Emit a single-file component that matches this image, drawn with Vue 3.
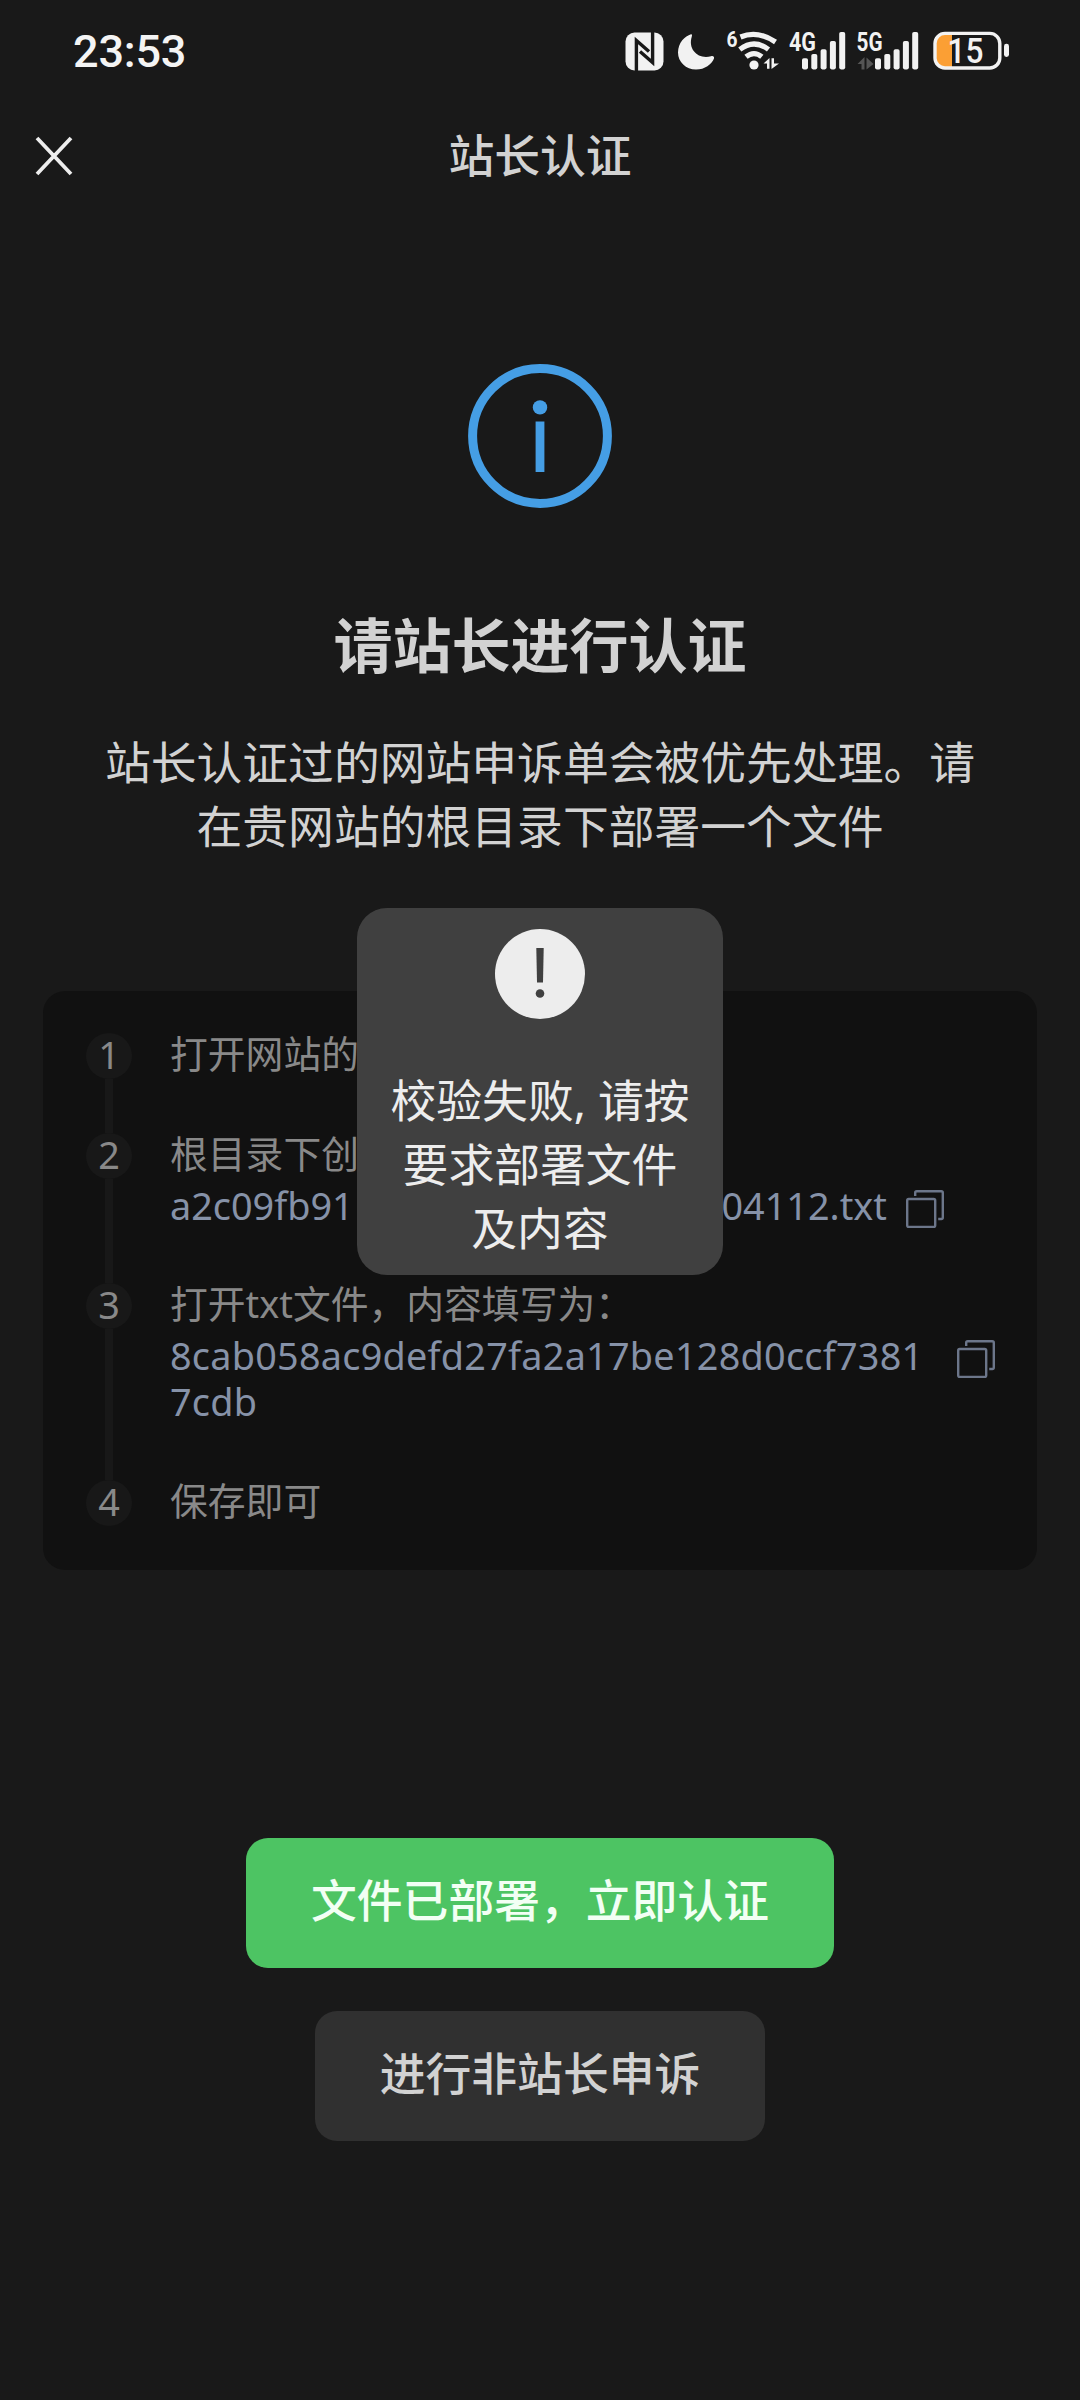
<script setup>
const steps = [
  { n: 1, text: '打开网站的', h: 100 },
  { n: 2, text: '根目录下创', code: [['a2c09fb91', '04112.txt']], h: 150 },
  { n: 3, text: '打开txt文件，内容填写为：', code: [['8cab058ac9defd27fa2a17be128d0ccf7381'], ['7cdb']], h: 197 },
  { n: 4, text: '保存即可', h: 60 },
]
const levels = [58.3, 54, 49.3, 41, 32]
const bars = (x0) => levels.map((y, i) => ({ x: x0 + i * 9.3, y, h: 69.4 - y }))
const signals = [...bars(802), ...bars(875)]
</script>

<template>
  <div class="screen">
    <header class="status">
      <span class="time">23:53</span>
      <svg class="indicators" viewBox="600 0 480 100" width="480" height="100" fill="#f2f2f2">
        <!-- NFC -->
        <rect x="625.5" y="32.5" width="38" height="38" rx="9" />
        <path d="M636.400 71.500V40.500L649 51.500" fill="none" stroke="#191919" stroke-width="3.400" />
        <path d="M652.600 31.500V62.500L640 51.500" fill="none" stroke="#191919" stroke-width="3.400" />
        <!-- Moon -->
        <path d="M691 34.200C685 36 678 42.500 678 52.500C678 62 686 69.500 696 69.500C705 69.500 711.500 64.500 714 58.500C714.500 56.500 713 55.500 711 56.200C699 59.800 687.500 50 691.800 36.500C692.300 34.800 692 34 691 34.200Z" />
        <!-- Wi-Fi -->
        <g fill="none" stroke="#f2f2f2" stroke-width="5.200">
          <path d="M740.500 37Q757.500 29.800 775.500 42" />
          <path d="M739.800 49.500Q754 38.500 768.500 49.500" />
          <path d="M746 56.800Q754 50.500 761.800 56.800" />
        </g>
        <circle cx="754" cy="65" r="4.600" />
        <path d="M763.500 63.500L769.500 58V68.700H767V63.500ZM771.500 69V58.300H774V63.500H779Z" />
        <text class="tag" x="726.500" y="46.500" font-size="22" textLength="11" lengthAdjust="spacingAndGlyphs">6</text>
        <text class="tag" x="789" y="50.500" font-size="25" textLength="27" lengthAdjust="spacingAndGlyphs">4G</text>
        <text class="tag" x="856.500" y="50.500" font-size="25" textLength="26" lengthAdjust="spacingAndGlyphs">5G</text>
        <rect v-for="(b, i) in signals" :key="i" :x="b.x" :y="b.y" width="6" :height="b.h" rx="1.800" />
        <path d="M857.500 64L864.500 57V69.500H861.500V64ZM866.500 69.500V57.500L873.500 64Z" fill="#555" />
        <!-- Battery -->
        <path d="M945 34H952V67.500H945Q936 67.500 936 57V44Q936 34 945 34Z" fill="#fb9f34" />
        <rect x="935" y="33.400" width="64.800" height="34.600" rx="10" fill="none" stroke="#f2f2f2" stroke-width="3.400" />
        <rect x="1004" y="43.800" width="5" height="13.200" rx="2.400" />
        <text class="tag level" x="947.500" y="62.500" font-size="34.500" textLength="36" lengthAdjust="spacingAndGlyphs">15</text>
      </svg>
    </header>

    <nav class="nav">
      <svg class="close" width="40" height="40" viewBox="0 0 40 40" stroke="#ededed" stroke-width="3.800">
        <path d="M3 2L37 38M37 2L3 38" />
      </svg>
      <h1>站长认证</h1>
      <span class="side"></span>
    </nav>

    <main>
      <svg class="info" width="144" height="144" viewBox="0 0 144 144">
        <circle cx="72" cy="72" r="67.400" fill="none" stroke="#459ee5" stroke-width="9" />
        <circle cx="72" cy="43.400" r="7.200" fill="#459ee5" />
        <rect x="67.600" y="57.500" width="8.800" height="50.500" fill="#459ee5" />
      </svg>
      <h2>请站长进行认证</h2>
      <p class="desc">站长认证过的网站申诉单会被优先处理。请<br />在贵网站的根目录下部署一个文件</p>

      <ol class="card">
        <li v-for="s in steps" :key="s.n" :style="{ height: s.h + 'px' }">
          <div class="rail">
            <span class="num">{{ s.n }}</span>
            <span v-if="s.n < 4" class="line"></span>
          </div>
          <div class="body">
            <p>{{ s.text }}</p>
            <div v-if="s.code" class="code" :class="'code' + s.n">
              <div>
                <p v-for="(row, i) in s.code" :key="i" class="row"><span v-for="c in row" :key="c">{{ c }}</span></p>
              </div>
              <svg width="38" height="38" viewBox="0 0 38 38" fill="none" stroke="#6c768a" stroke-width="2.400">
                <rect x="1.200" y="9" width="28" height="28" rx="1.500" />
                <path d="M9.200 6V2.700Q9.200 1.200 10.700 1.200H35.300Q36.800 1.200 36.800 2.700V27.500Q36.800 29 35.300 29H32.200" />
              </svg>
            </div>
          </div>
        </li>
      </ol>

      <div class="actions">
        <button class="primary">文件已部署，立即认证</button>
        <button class="secondary">进行非站长申诉</button>
      </div>
    </main>

    <div class="toast">
      <svg width="90" height="90" viewBox="0 0 90 90">
        <circle cx="45" cy="45" r="45" fill="#ededed" />
        <path d="M41.300 19H48.700L48 53.500H42Z" fill="#404040" />
        <circle cx="45" cy="64.500" r="4.300" fill="#404040" />
      </svg>
      <p>校验失败, 请按<br />要求部署文件<br />及内容</p>
    </div>
  </div>
</template>

<style>
body { background: #191919; }
</style>

<style scoped>
* { box-sizing: border-box; margin: 0; padding: 0; }
.screen {
  position: relative;
  width: 1080px;
  height: 2400px;
  overflow: hidden;
  background: #191919;
  color: #d2d2d2;
  font-family: "Noto Sans", "Noto Sans CJK SC", sans-serif;
}
.status { display: flex; justify-content: space-between; height: 100px; }
.time {
  padding-left: 73px;
  font: 500 45px/104px Roboto, sans-serif;
  letter-spacing: -0.200px;
  color: #f4f4f4;
}
.tag { font-family: Roboto, sans-serif; font-weight: 700; }
.level { font-weight: 500; }
.nav {
  display: flex;
  align-items: center;
  justify-content: space-between;
  height: 112px;
  padding: 0 33px;
}
.close { margin-left: 1px; }
.side { width: 41px; }
.nav h1 { font-size: 45.800px; line-height: 64px; font-weight: 500; margin-top: -2px; }
main { display: flex; flex-direction: column; align-items: center; }
.info { margin-top: 152px; }
h2 { margin-top: 97px; font-size: 59px; line-height: 80px; font-weight: 700; }
.desc { margin-top: 45px; font-size: 45.800px; line-height: 64px; text-align: center; white-space: nowrap; }
.card {
  width: 994px;
  height: 579px;
  margin-top: 133px;
  padding: 40px 0 0 43px;
  border-radius: 22px;
  background: #111;
  color: #898989;
  font-size: 37.800px;
  list-style: none;
}
li { display: flex; }
.rail { display: flex; flex-direction: column; align-items: center; width: 46px; margin-right: 38px; }
.num {
  flex: none;
  width: 46px;
  height: 46px;
  margin-top: 2px;
  border-radius: 50%;
  background: #181818;
  text-align: center;
  line-height: 43px;
}
.line { flex: 1; width: 8px; margin-bottom: -2px; background: #181818; }
.body { line-height: 46px; white-space: nowrap; }
.code { display: flex; color: #8692a8; padding-top: 6px; }
.code svg { margin-top: 7px; }
.row { display: flex; justify-content: space-between; }
.code2 .row { width: 717px; }
.code2 svg { margin-left: 19px; }
.code3 { letter-spacing: 0.250px; }
.code3 svg { margin-left: 34px; }
.actions { display: flex; flex-direction: column; align-items: center; gap: 43px; margin-top: 268px; }
button {
  height: 130px;
  border: 0;
  border-radius: 22px;
  font: 500 45.800px/120px "Noto Sans CJK SC", sans-serif;
  white-space: nowrap;
  padding-bottom: 10px;
}
.primary { width: 588px; background: #4dc463; color: #f2fff4; }
.secondary { width: 450px; background: #303030; color: #d2d2d2; }
.toast {
  position: absolute;
  left: 357px;
  top: 908px;
  width: 366px;
  height: 367px;
  padding-top: 21px;
  border-radius: 30px;
  background: #404040;
  color: #ededed;
  display: flex;
  flex-direction: column;
  align-items: center;
}
.toast p { margin-top: 49px; font-size: 45.800px; line-height: 64px; text-align: center; white-space: nowrap; }
</style>
